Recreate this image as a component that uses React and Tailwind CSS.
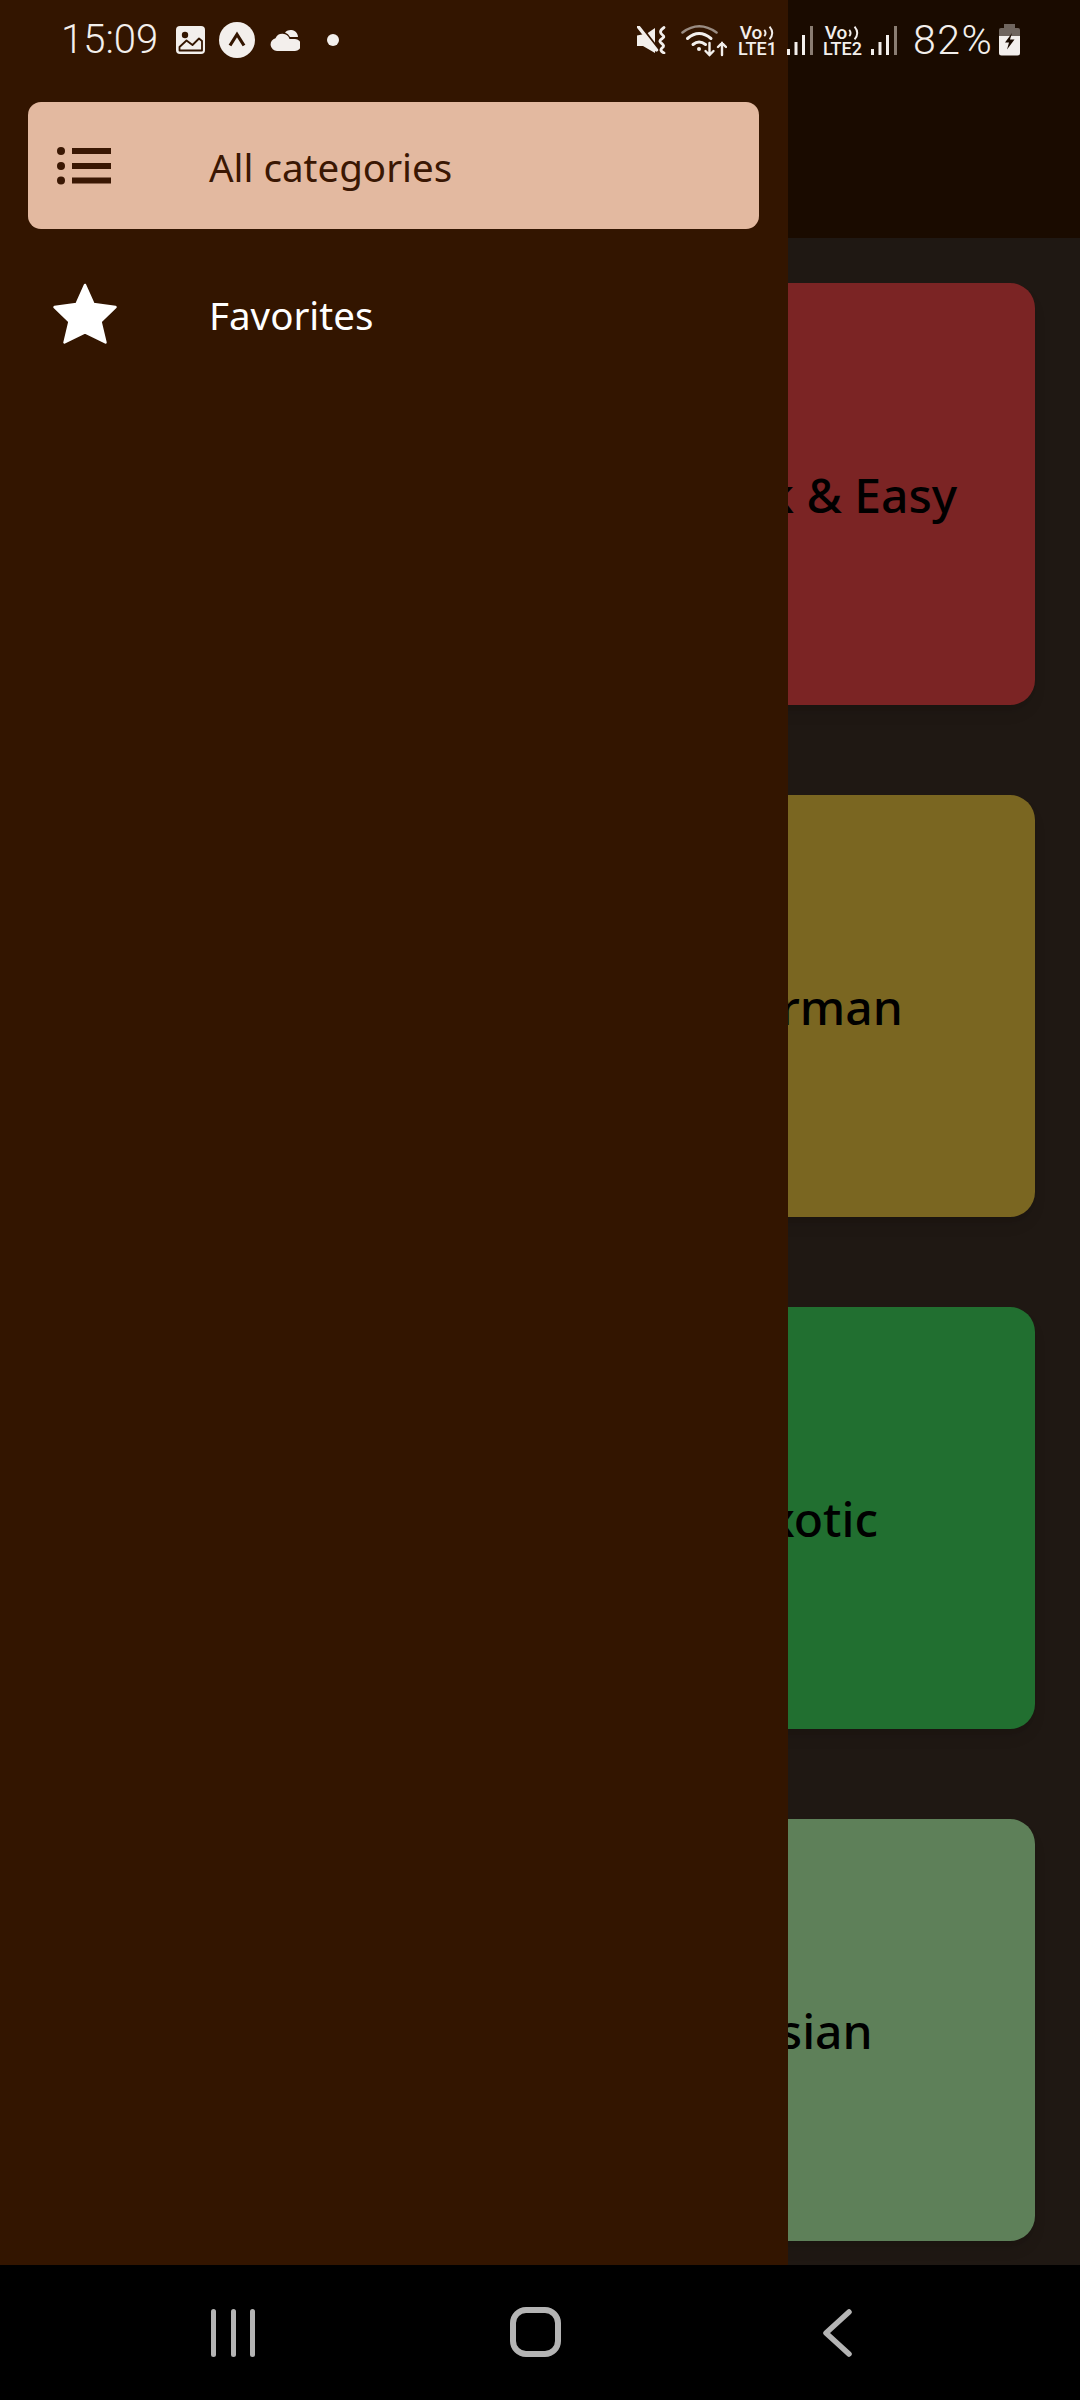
const CATEGORIES = [
  { title: "Italian", color: "bg-[#5a2a6e]" },
  { title: "Quick & Easy", color: "bg-[#7b2424]" },
  { title: "Hamburgers", color: "bg-[#7a4a12]" },
  { title: "German", color: "bg-[#7a6621]" },
  { title: "Light & Lovely", color: "bg-[#23467a]" },
  { title: "Exotic", color: "bg-[#216f30]" },
  { title: "Breakfast", color: "bg-[#2a6a80]" },
  { title: "Asian", color: "bg-[#5e8059]" },
];

const BROWN = "#331500";

const ImageIcon = () => (
  <svg width="29" height="28" viewBox="0 0 29 28">
    <rect width="29" height="28" rx="4" fill="#f3efec" />
    <circle cx="9" cy="9" r="3.2" fill={BROWN} />
    <path d="M3.5 24.5V21L10.5 14.5L16.5 19L23 12.5L26 15V24.5Z" fill="#f3efec" stroke={BROWN} strokeWidth="1.8" strokeLinejoin="round" />
  </svg>
);

const ArrowCircleIcon = () => (
  <svg width="36" height="36" viewBox="0 0 36 36">
    <circle cx="18" cy="18" r="18" fill="#f3efec" />
    <path d="M11 23.5L18 12.5L25 23.5" fill="none" stroke={BROWN} strokeWidth="3.2" />
  </svg>
);

const CloudIcon = () => (
  <svg width="30" height="22" viewBox="0 0 30 22">
    <path d="M15 3.5A7.5 7.5 0 0 1 27 4.5A7 7 0 0 1 28 8H20A9 9 0 0 0 15 3.5Z" fill="#f3efec" />
    <path d="M7 22A6.5 6.5 0 0 1 5.5 9.2A7.5 7.5 0 0 1 19.5 10H25A6 6 0 0 1 25 22Z" fill="#f3efec" />
  </svg>
);

const MuteIcon = () => (
  <svg width="30" height="28" viewBox="0 0 30 28">
    <path d="M0 9.5V20H6L18 27V2L10 7.5Z" fill="#f3efec" />
    <path d="M2 -1L21 24" stroke={BROWN} strokeWidth="4" />
    <path d="M1.5 1L19.5 24" stroke="#f3efec" strokeWidth="3.4" strokeLinecap="round" />
    <path d="M27 1.5C22 5 23 7 26 9.5C29 12 22 13 23 15.5C24 18 29 19 25 22C23 24 24 25.5 27 27" fill="none" stroke="#f3efec" strokeWidth="2.8" strokeLinecap="round" />
  </svg>
);

const WifiIcon = () => (
  <svg width="46" height="34" viewBox="0 0 46 34" fill="none" strokeLinecap="round">
    <path d="M1.5 9.5Q18 -3 35.5 9.5" stroke="#9a8c82" strokeWidth="2.6" />
    <path d="M6.5 15.5Q18 5.5 30 15.5" stroke="#f3efec" strokeWidth="3" />
    <path d="M12 21.5Q18 16.5 24.5 21.5" stroke="#f3efec" strokeWidth="3" />
    <circle cx="18" cy="26" r="2" fill="#f3efec" />
    <path d="M28.5 20V32M24.5 28L28.5 32L32.5 28" stroke="#f3efec" strokeWidth="2.4" />
    <path d="M41 32V20M37 24L41 20L45 24" stroke="#f3efec" strokeWidth="2.4" />
  </svg>
);

const SignalIcon = () => (
  <svg width="27" height="29" viewBox="0 0 27 29">
    <rect x="0" y="23" width="3" height="6" fill="#f3efec" />
    <rect x="7.5" y="16" width="3" height="13" fill="#f3efec" />
    <rect x="15" y="9" width="3" height="20" fill="#f3efec" />
    <rect x="23" y="0" width="3" height="29" fill="#8a7d72" />
  </svg>
);

const VoLte = ({ label, width }) => (
  <div className={`flex flex-col items-center ${width}`}>
    <div className="flex items-center h-[16px]">
      <span className="text-[19px] leading-[16px] font-medium">Vo</span>
      <svg width="13" height="16" viewBox="0 0 12 15" fill="none" stroke="#f3efec" strokeWidth="1.8">
        <path d="M2 4.5Q4.5 7.5 2 10.5" />
        <path d="M7 1.5Q12 7.5 7 13.5" />
      </svg>
    </div>
    <span className="text-[18px] leading-[15px] font-medium">{label}</span>
  </div>
);

const BatteryIcon = () => (
  <svg width="21" height="32" viewBox="0 0 21 32">
    <path d="M5 0H16V4H5Z" fill="#6f655e" />
    <path d="M2 4H19A2 2 0 0 1 21 6V12H0V6A2 2 0 0 1 2 4Z" fill="#6f655e" />
    <path d="M0 12H21V29A2.5 2.5 0 0 1 18.5 31.5H2.5A2.5 2.5 0 0 1 0 29Z" fill="#f3efec" />
    <path d="M13 9L6 18.5H10L8 25.5L15.5 15.5H11Z" fill="#1a0b00" />
  </svg>
);

const StatusBar = () => (
  <div className="absolute top-0 left-0 right-0 h-[80px] pl-[61px] flex items-center text-[#f3efec] font-['Roboto',sans-serif]">
    <span className="text-[40px] leading-none font-light w-[115px]">15:09</span>
    <ImageIcon />
    <div className="ml-[14px]"><ArrowCircleIcon /></div>
    <div className="ml-[15px]"><CloudIcon /></div>
    <div className="ml-[27px] w-3 h-3 rounded-full bg-[#f3efec]" />
    <div className="ml-[298px]"><MuteIcon /></div>
    <div className="ml-[14px]"><WifiIcon /></div>
    <div className="ml-[11px]"><VoLte label="LTE1" width="w-[39px]" /></div>
    <div className="ml-[10px] mt-[1px]"><SignalIcon /></div>
    <div className="ml-[8px]"><VoLte label="LTE2" width="w-[41px]" /></div>
    <div className="ml-[8px] mt-[1px]"><SignalIcon /></div>
    <span className="ml-[15px] w-[78px] text-[41px] leading-none font-light tracking-[1.5px]">82%</span>
    <div className="ml-[8px]"><BatteryIcon /></div>
  </div>
);

const ListIcon = ({ color }) => (
  <svg width="54" height="38" viewBox="0 0 54 38" fill={color}>
    <circle cx="4" cy="4" r="4" />
    <circle cx="4" cy="19" r="4" />
    <circle cx="4" cy="33.5" r="4" />
    <rect x="15" y="1" width="39" height="6" />
    <rect x="15" y="16" width="39" height="6" />
    <rect x="15" y="30.5" width="39" height="6" />
  </svg>
);

const StarIcon = ({ color }) => (
  <svg width="66" height="62" viewBox="0 0 66 62" fill={color}>
    <path d="M33 2L41.5 21L63.5 24L48.5 38.5L53.5 59.5L33 49.5L12.5 59.5L17.5 38.5L2.5 24L24.5 21Z" stroke={color} strokeWidth="2.5" strokeLinejoin="round" />
  </svg>
);

const DrawerItem = ({ icon, label, active }) => (
  <div
    className={`h-[127px] flex items-center rounded-[13px] ${
      active ? "bg-[#e3b9a0] text-[#3a1703]" : "text-white"
    }`}
  >
    <div className="w-[181px] pl-[29px] flex items-center">{icon}</div>
    <span className="pt-[3px] text-[38.5px] leading-none font-['Noto_Sans',sans-serif]">{label}</span>
  </div>
);

const NavBar = () => (
  <div className="h-[135px] bg-black flex items-center pl-[211px] text-[#b4b4b4]">
    <svg width="44" height="48" viewBox="0 0 44 48" fill="currentColor">
      <rect x="0" y="0" width="5" height="48" rx="2.5" />
      <rect x="20" y="0" width="5" height="48" rx="2.5" />
      <rect x="39" y="0" width="5" height="48" rx="2.5" />
    </svg>
    <svg className="ml-[255px] -mt-[2px]" width="51" height="50" viewBox="0 0 51 50" fill="none" stroke="currentColor" strokeWidth="6">
      <rect x="3" y="3" width="45" height="44" rx="13" />
    </svg>
    <svg className="ml-[261px]" width="30" height="48" viewBox="0 0 30 48" fill="none" stroke="currentColor" strokeWidth="5.5" strokeLinecap="round" strokeLinejoin="round">
      <path d="M27 3L4 24L27 45" />
    </svg>
  </div>
);

export default function App() {
  return (
    <div className="w-[1080px] h-[2400px] flex flex-col bg-black overflow-hidden">
      <div className="relative h-[2265px] bg-[#1f1813] overflow-hidden">
        <div className="h-[238px] bg-[#1a0b00]" />
        <div className="grid grid-cols-2 gap-x-[90px] gap-y-[90.5px] px-[45px] pt-[45px]">
          {CATEGORIES.map((category) => (
            <div
              key={category.title}
              className={`h-[421.5px] rounded-[25px] flex items-center justify-center shadow-lg ${category.color}`}
            >
              <span className="pt-[3px] text-[48px] font-medium text-black font-['Noto_Sans',sans-serif]">
                {category.title}
              </span>
            </div>
          ))}
        </div>

        <div className="absolute top-0 left-0 bottom-0 w-[788px] bg-[#331500] pt-[102px] pl-[28px] pr-[29px]">
          <DrawerItem active label="All categories" icon={<ListIcon color="#3a1703" />} />
          <div className="mt-[21px]">
            <DrawerItem label="Favorites" icon={<div className="-ml-[5px]"><StarIcon color="#ffffff" /></div>} />
          </div>
        </div>

        <StatusBar />
      </div>
      <NavBar />
    </div>
  );
}
